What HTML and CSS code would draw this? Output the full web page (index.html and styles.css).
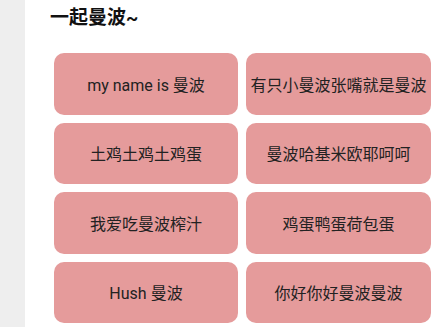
FILE: index.html
```html
<!DOCTYPE html>
<html>
<head>
<meta charset="utf-8">
<link rel="stylesheet" href="styles.css">
</head>
<body>
<div class="app">
  <div class="sidebar"></div>
  <main class="main">
    <h1 class="title">一起曼波~</h1>
    <div class="grid">
      <div class="btn">my name is 曼波</div>
      <div class="btn">有只小曼波张嘴就是曼波</div>
      <div class="btn">土鸡土鸡土鸡蛋</div>
      <div class="btn">曼波哈基米欧耶呵呵</div>
      <div class="btn">我爱吃曼波榨汁</div>
      <div class="btn">鸡蛋鸭蛋荷包蛋</div>
      <div class="btn">Hush 曼波</div>
      <div class="btn">你好你好曼波曼波</div>
    </div>
  </main>
</div>
</body>
</html>
```

FILE: styles.css
```css
html, body {
  margin: 0;
  padding: 0;
  background: #ffffff;
  font-family: Roboto, "Noto Sans CJK SC", sans-serif;
}
.app {
  display: flex;
  height: 327px;
  overflow: hidden;
}
.sidebar {
  width: 25px;
  flex: none;
  background: #eeeeee;
}
.main {
  flex: 1;
  padding: 0 16px 0 25px;
}
.title {
  margin: 0;
  padding-top: 5px;
  height: 53px;
  box-sizing: border-box;
  font-size: 19px;
  font-weight: 700;
  line-height: 26px;
  color: #111111;
}
.grid {
  display: grid;
  grid-template-columns: 184px 185px;
  grid-auto-rows: 61.5px;
  gap: 8px;
  padding-left: 4px;
}
.btn {
  background: #e59b9b;
  border-radius: 10px;
  display: flex;
  align-items: center;
  justify-content: center;
  font-size: 16px;
  color: #222222;
  white-space: nowrap;
}
```
